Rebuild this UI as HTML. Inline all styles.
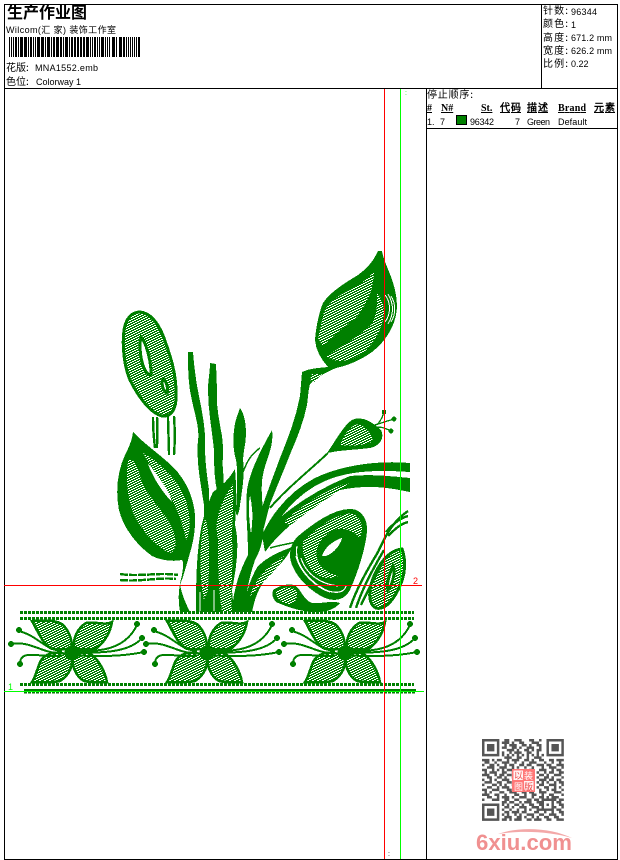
<!DOCTYPE html>
<html><head><meta charset="utf-8"><style>
html,body{margin:0;padding:0;background:#fff;width:620px;height:860px;overflow:hidden}
svg{display:block}
text{font-family:"Liberation Sans","WenQuanYi Zen Hei","Noto Sans CJK SC",sans-serif;font-size:9px;fill:#000}
.z{font-family:"WenQuanYi Zen Hei","Noto Sans CJK SC",sans-serif}
.h{font-weight:bold;font-family:"Liberation Serif","WenQuanYi Zen Hei",serif;font-size:10px}
</style></head><body>
<svg width="620" height="860" viewBox="0 0 620 860" xmlns="http://www.w3.org/2000/svg">
<defs>
<pattern id="d" width="5" height="5" patternUnits="userSpaceOnUse" shape-rendering="crispEdges">
<rect width="5" height="5" fill="#008000"/>
<path d="M0 0h1v1h-1zM0 2h1v1h-1zM1 2h1v1h-1zM1 4h1v1h-1zM2 4h1v1h-1zM2 1h1v1h-1zM3 1h1v1h-1zM3 3h1v1h-1zM4 3h1v1h-1zM4 0h1v1h-1z" fill="#fff"/>
</pattern>
<g id="fl">
<path d="M32 621C45 620 58 620 63 625C68 630 72 638 72 648C64 650 54 650 50 648C42 642 38 632 32 621Z" fill="url(#d)" stroke="#008000" stroke-width="2.5"/>
<path d="M112 622C105 626 95 621 86 623C78 628 73 637 74 648C82 650 92 650 97 648C104 642 110 634 112 622Z" fill="url(#d)" stroke="#008000" stroke-width="2.5"/>
<path d="M32 682C37 674 38 664 42 659C48 652 60 650 72 657C73 665 70 675 60 681C52 683 42 682 32 682Z" fill="url(#d)" stroke="#008000" stroke-width="2.5"/>
<path d="M107 682C105 672 100 662 92 655C86 651 78 651 73 654C71 664 75 676 84 681C92 683 100 682 107 682Z" fill="url(#d)" stroke="#008000" stroke-width="2.5"/>
<circle cx="72" cy="653" r="7.5" fill="#008000"/>
<g fill="none" stroke="#008000" stroke-width="2">
<path d="M72 651C100 652 125 650 137 625"/><path d="M72 653C105 653 130 652 142 638"/><path d="M72 655C100 657 125 656 144 652"/>
<path d="M62 651C45 650 38 636 19 631"/><path d="M62 653C45 655 30 640 11 644"/><path d="M62 656C45 657 30 653 24 656C21 658 20 660 20 664"/>
</g>
<g fill="#008000"><circle cx="137" cy="624" r="3"/><circle cx="142" cy="638" r="3"/><circle cx="144" cy="652" r="3"/><circle cx="19" cy="630" r="3"/><circle cx="11" cy="644" r="3"/><circle cx="20" cy="664" r="3"/></g>
</g>
</defs>

<!-- frame -->
<g fill="none" stroke="#000" stroke-width="1" shape-rendering="crispEdges">
<path d="M4.5 4.5H617.5V859.5H4.5Z"/><path d="M4.5 88.5H617.5"/><path d="M541.5 4.5V88.5"/><path d="M426.5 88.5V859.5"/><path d="M426.5 128.5H617.5"/>
</g>

<!-- header left -->
<text x="7" y="18" class="z" style="font-size:16px;font-weight:bold" textLength="80" lengthAdjust="spacing">生产作业图</text>
<text x="6" y="33" style="font-size:9px" textLength="110">Wilcom(汇 家) 装饰工作室</text>
<path d="M9 37h1v20h-1zM11 37h1v20h-1zM13 37h1v20h-1zM15 37h2v20h-2zM18 37h1v20h-1zM20 37h3v20h-3zM24 37h3v20h-3zM28 37h1v20h-1zM30 37h2v20h-2zM33 37h1v20h-1zM35 37h1v20h-1zM37 37h3v20h-3zM41 37h3v20h-3zM45 37h1v20h-1zM47 37h3v20h-3zM51 37h1v20h-1zM53 37h2v20h-2zM56 37h3v20h-3zM60 37h2v20h-2zM63 37h1v20h-1zM65 37h3v20h-3zM69 37h1v20h-1zM71 37h2v20h-2zM74 37h2v20h-2zM77 37h2v20h-2zM80 37h2v20h-2zM83 37h2v20h-2zM86 37h3v20h-3zM90 37h1v20h-1zM92 37h1v20h-1zM94 37h2v20h-2zM97 37h1v20h-1zM99 37h1v20h-1zM101 37h3v20h-3zM105 37h1v20h-1zM107 37h1v20h-1zM109 37h1v20h-1zM112 37h3v20h-3zM116 37h1v20h-1zM119 37h3v20h-3zM123 37h2v20h-2zM126 37h1v20h-1zM128 37h1v20h-1zM130 37h1v20h-1zM132 37h1v20h-1zM134 37h1v20h-1zM136 37h1v20h-1zM138 37h2v20h-2z" fill="#000" shape-rendering="crispEdges"/>
<text x="6" y="71" class="z" style="font-size:10px">花版:</text><text x="35" y="71" textLength="63">MNA1552.emb</text>
<text x="6" y="85" class="z" style="font-size:10px">色位:</text><text x="36" y="85" textLength="45">Colorway 1</text>

<!-- header right -->
<g>
<text x="543" y="14" class="z" style="font-size:10px" textLength="25">针数:</text><text x="571" y="15" textLength="26">96344</text>
<text x="543" y="27" class="z" style="font-size:10px" textLength="25">颜色:</text><text x="571" y="28">1</text>
<text x="543" y="41" class="z" style="font-size:10px" textLength="25">高度:</text><text x="571" y="41" textLength="41">671.2 mm</text>
<text x="543" y="54" class="z" style="font-size:10px" textLength="25">宽度:</text><text x="571" y="54" textLength="41">626.2 mm</text>
<text x="543" y="67" class="z" style="font-size:10px" textLength="25">比例:</text><text x="571" y="67">0.22</text>
</g>

<!-- table -->
<text x="427" y="98" class="z" style="font-size:10px" textLength="46">停止顺序:</text>
<g text-decoration="underline">
<text x="427" y="111" class="h">#</text><text x="441" y="111" class="h">N#</text><text x="481" y="111" class="h">St.</text><text x="500" y="111" class="h" textLength="21">代码</text><text x="527" y="111" class="h" textLength="21">描述</text><text x="558" y="111" class="h" textLength="28">Brand</text><text x="594" y="111" class="h" textLength="21">元素</text>
</g>
<text x="427" y="125">1.</text><text x="440" y="125">7</text>
<rect x="456.5" y="115.5" width="10" height="9" fill="#008000" stroke="#000" shape-rendering="crispEdges"/>
<text x="470" y="125" textLength="24">96342</text><text x="515" y="125">7</text><text x="527" y="125" textLength="23">Green</text><text x="558" y="125" textLength="29">Default</text>

<!-- embroidery -->
<g shape-rendering="crispEdges" fill="#008000">
<!-- bud -->
<path d="M378 251L382 251C384 265 396 280 397 305C397 325 385 342 372 352C358 362 345 366 336 368C326 372 316 378 310 384C308 392 308 398 307 405C304 420 298 436 291 452C284 470 277 486 270 504L262 535L255 530C262 505 272 480 280 458C288 438 296 418 300 396L302 372C310 368 320 368 328 367C320 358 316 350 315 340C316 325 320 310 323 303C330 292 345 283 358 275C368 268 374 260 378 251Z"/>
<path fill="url(#d)" d="M374 272C370 276 362 284 350 290C338 296 328 302 324 312L318 338L323 346C334 336 345 325 356 318C366 305 374 290 374 272Z"/>
<path fill="url(#d)" d="M377 292C378 306 376 316 372 324C360 335 345 345 326 356C336 364 352 362 364 352C376 342 384 325 384 310C383 302 380 296 377 292Z"/>
<path fill="none" stroke="#fff" stroke-width="1" d="M385 295C391 302 391 314 385 322M388 294C394 304 394 314 388 324M391 296C396 304 396 314 391 322"/>
<path fill="url(#d)" d="M312 374L322 374L314 382L310 380Z"/>
<!-- ring flower -->
<path fill="url(#d)" stroke="#008000" stroke-width="3" fill-rule="evenodd" d="M140 312C150 313 158 322 164 338C170 355 176 372 176 392C177 408 172 417 162 416C150 413 138 396 130 380C124 366 122 345 124 330C126 318 132 312 140 312ZM141 337C139 345 140 362 146 372C150 376 152 376 151 370C150 358 146 342 141 337ZM163 379C161 384 163 391 167 393C169 390 166 380 163 379Z"/>
<path fill="none" stroke="#008000" stroke-width="2.4" d="M153 417C153 428 154 440 155 448M157 417C158 428 157 440 157 448M168 416C168 428 169 442 169 455M174 416C175 430 175 442 174 455"/>
<!-- left big leaf -->
<path d="M133 432C148 448 172 462 182 478C192 492 196 510 195 525C194 542 190 552 188 560C186 566 184 575 180 585C182 595 186 604 190 612H180C178 600 178 590 182 575C183 568 184 562 182 560C172 562 160 560 152 556C138 546 124 530 119 510C115 490 118 470 125 455C130 445 132 440 133 432Z"/>
<path fill="url(#d)" d="M128 460C136 458 138 470 142 482C150 500 165 512 172 528C178 540 176 552 170 553C156 547 140 530 132 510C126 490 126 475 128 460Z"/>
<path fill="#fff" d="M148 464C156 470 168 485 172 502C164 494 154 480 148 464Z"/>
<path fill="url(#d)" d="M143 453C160 462 178 480 186 500C190 515 192 530 186 540C182 520 174 500 162 482C154 472 148 462 143 453Z"/>
<!-- small strands -->
<path fill="none" stroke="#008000" stroke-width="2.4" stroke-dasharray="8 1" d="M120 574C140 577 160 572 178 575M120 580C140 582 160 577 176 579"/>
<!-- stems -->
<path d="M188 352H193C194 366 196 382 199 396C203 416 206 432 205 448C205 462 207 475 209 490L209 525H204L204 505C200 480 196 460 198 440C200 428 194 412 191 396C188 382 188 366 188 352Z"/>
<path d="M210 363L216 364L217 390C216 405 219 420 222 436C224 450 222 460 223 470C224 482 224 490 222 500L218 495C214 480 214 465 214 450C212 430 208 410 208 390C208 380 210 372 210 363Z"/>
<path d="M240 408C243 412 246 420 246 434C246 444 243 452 243 460C245 470 243 485 240 505C239 515 236 520 236 510C237 490 238 470 236 460C233 450 233 440 234 430C235 420 238 414 240 408Z"/>
<!-- center leaf base -->
<path d="M235 469C237 490 236 510 235 525C240 545 236 570 232 590L234 612H196C196 590 196 560 200 535C202 520 207 505 213 492C222 486 230 478 235 469Z"/>
<path fill="url(#d)" d="M233 484C234 505 232 525 232 540C234 560 230 590 232 612H222C218 590 218 560 218 540C214 525 218 505 233 484Z"/>
<path fill="url(#d)" d="M205 518C210 530 210 560 208 590L204 600C199 580 199 540 205 518Z"/>
<path fill="none" stroke="#fff" stroke-width="1" d="M214 590V612M200 592V612"/>
<!-- blade -->
<path d="M272 430C274 445 268 455 264 470C260 485 262 500 264 520C264 535 262 548 255 560C250 575 246 590 245 612H232C233 590 240 570 248 555C248 530 245 510 247 490C250 470 262 448 272 430Z"/>
<path fill="#fff" d="M250 495C253 510 253 520 251 534C249 520 248 505 250 495Z"/>
<path fill="none" stroke="#008000" stroke-width="1.5" d="M243 472C247 462 250 455 260 448"/>
<!-- lower diag leaf -->
<path d="M245 600C248 585 254 572 258 566C266 558 278 552 292 547C286 560 278 566 272 572C262 582 256 592 252 612H244Z"/>
<path fill="url(#d)" d="M250 596C254 582 264 568 284 556C280 568 266 578 256 590Z"/>
<!-- thin stem and little leaf -->
<path fill="none" stroke="#008000" stroke-width="2" d="M270 508C285 490 310 470 328 453"/>
<path d="M327 453C336 440 344 425 352 420C362 415 372 422 381 430C385 438 380 446 370 448C355 450 340 450 327 453Z"/>
<path fill="url(#d)" d="M340 445C345 432 352 424 360 424C368 430 374 436 372 442C362 446 350 446 340 445Z"/>
<path fill="none" stroke="#008000" stroke-width="1.3" d="M372 426C378 424 384 422 394 419M374 428C380 426 385 428 391 431M378 424C381 420 383 416 384 412"/>
<circle cx="394" cy="419" r="2.4"/><circle cx="391" cy="431" r="2.4"/><rect x="382" y="410" width="4" height="4"/>
<!-- bands -->
<path d="M263 533C274 510 292 490 315 478C340 466 375 460 410 463V472C380 470 350 470 325 481C300 492 282 512 270 535Z"/>
<path d="M262 535C280 515 310 492 350 476C370 474 390 476 410 478V492C390 488 370 484 340 490C310 510 285 525 265 552Z"/>
<path fill="url(#d)" d="M284 522C300 506 325 490 350 482C335 495 305 512 290 526Z"/>
<!-- loop flower -->
<path fill-rule="evenodd" d="M297 537C315 522 335 508 352 509C362 510 368 520 367 532C365 550 358 572 350 590C345 600 335 602 325 598C312 592 298 580 292 565C288 555 290 545 297 537ZM322 556C328 558 340 548 342 538C334 540 324 548 322 556Z"/>
<path fill="url(#d)" d="M303 542C316 528 335 514 352 513C362 518 364 528 360 538C350 528 340 526 330 532C318 540 314 552 318 562C322 570 332 574 338 576C325 582 312 574 306 562C303 554 302 548 303 542Z"/>
<path fill="none" stroke="#fff" stroke-width="1.2" d="M297 546C294 562 306 578 322 588C332 594 344 594 346 586M301 558C306 574 320 584 338 586M296 556C300 572 316 588 330 592"/>
<path fill="none" stroke="#008000" stroke-width="1.5" d="M270 548C280 545 288 544 296 542"/>
<path d="M273 590C280 585 292 582 297 587C302 592 304 600 312 603C322 604 332 600 340 603C334 610 326 612 316 612C300 612 285 606 276 602C272 598 272 594 273 590Z"/>
<path fill="url(#d)" d="M276 592C284 586 294 586 297 592C298 600 294 604 288 604C280 602 276 598 276 592Z"/>
<!-- right oval -->
<path fill="url(#d)" stroke="#008000" stroke-width="3" fill-rule="evenodd" d="M402 549C406 560 406 575 398 590C392 602 384 610 376 608C368 604 368 590 374 576C380 562 390 550 402 549ZM393 566C390 572 386 584 388 590C392 586 396 572 393 566Z"/>
<path fill="none" stroke="#008000" stroke-width="2.4" d="M350 608C356 590 366 572 378 552C386 535 392 522 408 511M356 608C362 590 370 574 384 550M361 605C368 590 374 578 384 560M386 532C392 525 400 518 408 516M388 536C394 530 400 524 408 522"/>
<!-- horizontal braid -->
<path fill="none" stroke="#008000" stroke-width="3" stroke-dasharray="3 1" d="M20 612.500H414M20 618.500H414M20 684.500H414"/>
<path fill="none" stroke="#008000" stroke-width="2" d="M24 690H416"/>
<path fill="none" stroke="#008000" stroke-width="1.5" stroke-dasharray="3 1" d="M24 692.500H416"/>
<use href="#fl"/>
<use href="#fl" transform="translate(135 0)"/>
<use href="#fl" transform="translate(273 0)"/>
<!-- guide lines -->
<path fill="none" stroke="#ff0000" stroke-width="1" d="M384.500 89V859M4 585.500H422"/>
<path fill="none" stroke="#00ff00" stroke-width="1" d="M400.500 89V859M4 691.500H424"/>
</g>
<text x="413" y="584" style="font-size:9px;fill:#ff0000">2</text>
<text x="8" y="690" style="font-size:9px;fill:#00ff00">1</text>
<text x="405" y="95" style="font-size:7px;fill:#00ff00">:</text>
<text x="388" y="856" style="font-size:7px;fill:#000">:</text>

<!-- QR code -->
<g transform="translate(482 739) scale(2.48)" fill="none" stroke="#555" stroke-width="1" shape-rendering="auto">
<path d="M0 .5h7M9 .5h2M13 .5h3M19 .5h2M23 .5h1M26 .5h7
M0 1.500h1M6 1.500h1M8 1.500h3M12 1.500h1M15 1.500h2M20 1.500h3M26 1.500h1M32 1.500h1
M0 2.500h1M2 2.500h3M6 2.500h1M9 2.500h1M11 2.500h3M16 2.500h2M19 2.500h1M22 2.500h2M26 2.500h1M28 2.500h3M32 2.500h1
M0 3.500h1M2 3.500h3M6 3.500h1M8 3.500h2M12 3.500h2M15 3.500h1M18 3.500h3M23 3.500h1M26 3.500h1M28 3.500h3M32 3.500h1
M0 4.500h1M2 4.500h3M6 4.500h1M10 4.500h3M14 4.500h1M17 4.500h2M20 4.500h1M22 4.500h2M26 4.500h1M28 4.500h3M32 4.500h1
M0 5.500h1M6 5.500h1M8 5.500h1M11 5.500h1M13 5.500h3M18 5.500h2M22 5.500h1M26 5.500h1M32 5.500h1
M0 6.500h7M8 6.500h1M10 6.500h1M12 6.500h1M14 6.500h1M16 6.500h1M18 6.500h1M20 6.500h1M22 6.500h1M24 6.500h1M26 6.500h7
M9 7.500h3M14 7.500h2M18 7.500h1M21 7.500h3
M0 8.500h3M4 8.500h1M6 8.500h2M10 8.500h1M12 8.500h3M17 8.500h2M20 8.500h1M23 8.500h2M27 8.500h2M30 8.500h3
M1 9.500h2M5 9.500h1M8 9.500h3M13 9.500h1M16 9.500h1M19 9.500h3M25 9.500h1M28 9.500h1M31 9.500h1
M0 10.500h1M3 10.500h2M6 10.500h1M9 10.500h1M11 10.500h2M15 10.500h2M18 10.500h2M22 10.500h3M26 10.500h2M30 10.500h3
M2 11.500h3M7 11.500h3M12 11.500h1M14 11.500h1M17 11.500h1M20 11.500h1M24 11.500h1M27 11.500h3M32 11.500h1
M0 12.500h2M4 12.500h1M6 12.500h1M8 12.500h1M10 12.500h3M19 12.500h2M23 12.500h3M28 12.500h1M30 12.500h2
M1 13.500h1M3 13.500h3M8 13.500h2M12 13.500h1M22 13.500h1M25 13.500h1M27 13.500h2M31 13.500h2
M0 14.500h3M5 14.500h1M7 14.500h2M10 14.500h2M23 14.500h2M26 14.500h1M29 14.500h3
M2 15.500h2M6 15.500h2M9 15.500h1M12 15.500h1M22 15.500h1M25 15.500h2M28 15.500h1M32 15.500h1
M0 16.500h1M3 16.500h1M5 16.500h1M8 16.500h3M23 16.500h3M27 16.500h2M30 16.500h2
M1 17.500h3M6 17.500h2M10 17.500h2M22 17.500h1M24 17.500h1M26 17.500h1M29 17.500h1M31 17.500h2
M0 18.500h1M4 18.500h2M7 18.500h1M9 18.500h1M12 18.500h1M23 18.500h2M27 18.500h3M32 18.500h1
M2 19.500h2M6 19.500h1M8 19.500h3M22 19.500h1M25 19.500h2M29 19.500h1M31 19.500h1
M0 20.500h2M4 20.500h3M10 20.500h2M23 20.500h1M26 20.500h1M28 20.500h2M32 20.500h1
M1 21.500h1M3 21.500h1M7 21.500h2M11 21.500h3M16 21.500h2M19 21.500h2M23 21.500h3M29 21.500h3
M0 22.500h3M5 22.500h2M9 22.500h1M13 22.500h2M17 22.500h1M20 22.500h2M24 22.500h1M27 22.500h2M32 22.500h1
M2 23.500h2M6 23.500h1M8 23.500h3M12 23.500h1M15 23.500h3M20 23.500h1M23 23.500h2M26 23.500h1M28 23.500h3
M0 24.500h1M4 24.500h3M9 24.500h2M13 24.500h2M18 24.500h2M21 24.500h2M24 24.500h6M31 24.500h2
M8 25.500h2M11 25.500h2M15 25.500h1M17 25.500h3M22 25.500h2M24 25.500h1M28 25.500h1M30 25.500h2
M0 26.500h7M8 26.500h1M10 26.500h1M13 26.500h2M16 26.500h1M19 26.500h2M23 26.500h1M24 26.500h1M26 26.500h1M28 26.500h1M31 26.500h2
M0 27.500h1M6 27.500h1M9 27.500h2M12 27.500h1M15 27.500h3M20 27.500h3M24 27.500h1M28 27.500h2M32 27.500h1
M0 28.500h1M2 28.500h3M6 28.500h1M8 28.500h1M11 28.500h1M14 28.500h1M17 28.500h1M19 28.500h1M22 28.500h7M30 28.500h2
M0 29.500h1M2 29.500h3M6 29.500h1M9 29.500h2M12 29.500h3M16 29.500h2M21 29.500h2M25 29.500h1M28 29.500h1M31 29.500h2
M0 30.500h1M2 30.500h3M6 30.500h1M8 30.500h1M10 30.500h1M13 30.500h1M15 30.500h1M18 30.500h3M23 30.500h2M27 30.500h3M32 30.500h1
M0 31.500h1M6 31.500h1M9 31.500h3M14 31.500h2M17 31.500h1M20 31.500h1M22 31.500h1M25 31.500h2M29 31.500h2
M0 32.500h7M8 32.500h2M11 32.500h1M13 32.500h3M18 32.500h2M21 32.500h3M26 32.500h2M30 32.500h3"/>
</g>
<rect x="512" y="769" width="23" height="23" fill="#f77"/>
<rect x="513.500" y="770.500" width="9.500" height="9.500" fill="#fff3f3"/><rect x="524" y="781" width="9.500" height="9.500" fill="#fff3f3"/>
<text x="514" y="779" class="z" style="font-size:9px;fill:#e44">以</text><text x="524" y="779" class="z" style="font-size:9px;fill:#fff">装</text>
<text x="514" y="790" class="z" style="font-size:9px;fill:#fff">图</text><text x="524" y="790" class="z" style="font-size:9px;fill:#e44">版</text>

<!-- logo -->
<path d="M498 834C520 826 552 828 572 838C552 832 522 830 498 834Z" fill="#f3a8a8"/>
<text x="476" y="850" style="font-size:22px;font-weight:bold;fill:#f09090" textLength="96" lengthAdjust="spacingAndGlyphs">6xiu.com</text>
</svg>
</body></html>
